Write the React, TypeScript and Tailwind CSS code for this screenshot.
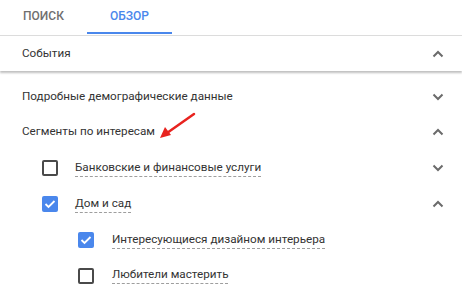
import React from "react";

const Chevron = ({ up }: { up?: boolean }) => (
  <svg width="12" height="8" viewBox="0 0 12 8" className="shrink-0">
    {up ? (
      <path d="M1.5 6.5 L6 2 L10.5 6.5" fill="none" stroke="#6b6b6b" strokeWidth="2" />
    ) : (
      <path d="M1.5 1.5 L6 6 L10.5 1.5" fill="none" stroke="#6b6b6b" strokeWidth="2" />
    )}
  </svg>
);

const Box = ({ checked }: { checked?: boolean }) =>
  checked ? (
    <div className="w-[16px] h-[16px] rounded-[2px] bg-[#4a87ec] flex items-center justify-center shrink-0">
      <svg width="12" height="10" viewBox="0 0 12 10">
        <path d="M1.5 5 L4.5 8 L10.5 2" fill="none" stroke="#fff" strokeWidth="1.8" />
      </svg>
    </div>
  ) : (
    <div className="w-[16px] h-[16px] rounded-[2px] border-2 border-[#4a4a4a] shrink-0" />
  );

const Label = ({ children }: { children: React.ReactNode }) => (
  <span className="border-b border-dashed border-[#9e9e9e] leading-[15px] pb-[1px]">{children}</span>
);

export default function App() {
  return (
    <div
      className="w-[462px] h-[306px] bg-white text-[11.7px] text-[#333] overflow-hidden relative"
      style={{ fontFamily: "Roboto, 'Liberation Sans', sans-serif" }}
    >
      <div className="flex h-[36px] border-b border-[#dcdcdc]">
        <div className="w-[87px] flex items-center justify-center text-[12px] font-medium text-[#6f6f6f] pb-[3px]">
          ПОИСК
        </div>
        <div className="w-[85px] flex items-center justify-center text-[12px] font-medium text-[#4a87ec] relative pb-[3px]">
          ОБЗОР
          <div className="absolute left-0 right-0 bottom-[1px] h-[2px] bg-[#4a87ec]" />
        </div>
      </div>
      <div className="h-[35px] flex items-center justify-between pl-[22px] pr-[18px] shadow-[0_2px_2px_rgba(0,0,0,0.25)]">
        <span>События</span>
        <Chevron up />
      </div>
      <div className="mt-[8px] h-[35px] flex items-center justify-between pl-[22px] pr-[18px]">
        <span>Подробные демографические данные</span>
        <Chevron />
      </div>
      <div className="h-[36px] flex items-center justify-between pl-[22px] pr-[18px]">
        <span>Сегменты по интересам</span>
        <Chevron up />
      </div>
      <div className="h-[36px] flex items-center justify-between pl-[42px] pr-[18px]">
        <div className="flex items-center gap-[17px]">
          <Box />
          <Label>Банковские и финансовые услуги</Label>
        </div>
        <Chevron />
      </div>
      <div className="h-[36px] flex items-center justify-between pl-[42px] pr-[18px]">
        <div className="flex items-center gap-[17px]">
          <Box checked />
          <Label>Дом и сад</Label>
        </div>
        <Chevron up />
      </div>
      <div className="h-[36px] flex items-center pl-[78px] pr-[18px]">
        <div className="flex items-center gap-[18px]">
          <Box checked />
          <Label>Интересующиеся дизайном интерьера</Label>
        </div>
      </div>
      <div className="h-[35px] flex items-center pl-[78px] pr-[18px]">
        <div className="flex items-center gap-[18px]">
          <Box />
          <Label>Любители мастерить</Label>
        </div>
      </div>
      <svg className="absolute left-[155px] top-[108px]" width="45" height="36" viewBox="0 0 45 36">
        <path d="M39 6 L12 25" stroke="#e8231f" strokeWidth="2.5" strokeLinecap="round" />
        <path d="M5 30 L10 19 L16 27 Z" fill="#e8231f" />
      </svg>
    </div>
  );
}
